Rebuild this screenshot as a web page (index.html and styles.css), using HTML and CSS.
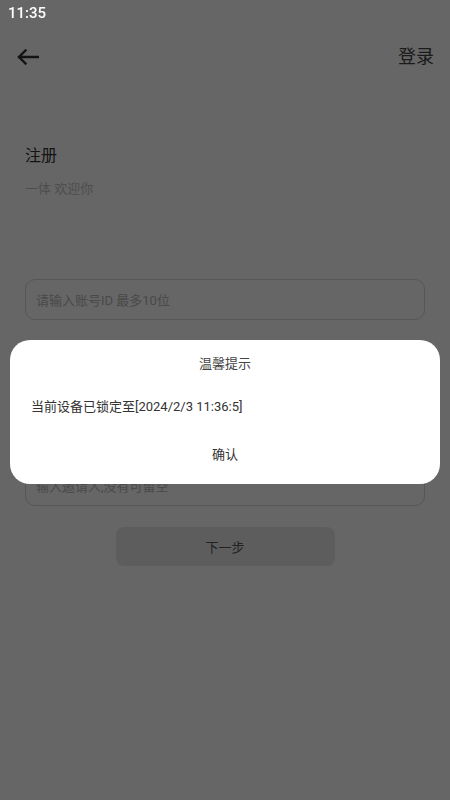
FILE: index.html
```html
<!DOCTYPE html>
<html lang="zh">
<head>
<meta charset="utf-8">
<title>注册</title>
<link rel="stylesheet" href="styles.css">
</head>
<body>
<div class="status">11:35</div>
<div class="page">
  <div class="header">
    <svg class="back" width="22" height="16" viewBox="0 0 22 16">
      <path d="M21 8H2 M8.5 1.5L2 8l6.5 6.5" fill="none" stroke="#333" stroke-width="2.4" stroke-linecap="square" stroke-linejoin="miter"/>
    </svg>
    <span class="login">登录</span>
  </div>
  <div class="title">注册</div>
  <div class="subtitle">一体 欢迎你</div>
  <div class="form">
    <div class="input">请输入账号ID 最多10位</div>
    <div class="input"></div>
    <div class="input">输入邀请人,没有可留空</div>
  </div>
  <div class="btn">下一步</div>
</div>
<div class="mask">
  <div class="dialog">
    <div class="d-title">温馨提示</div>
    <div class="d-msg">当前设备已锁定至[2024/2/3 11:36:5]</div>
    <div class="d-ok">确认</div>
  </div>
</div>
</body>
</html>
```
FILE: styles.css
```css
html, body {
  margin: 0;
  padding: 0;
  background: #fff;
  font-family: Roboto, "Noto Sans CJK SC", sans-serif;
  width: 450px;
  height: 800px;
  overflow: hidden;
}
.status {
  position: relative;
  z-index: 3;
  height: 26px;
  line-height: 26px;
  padding-left: 8px;
  font-size: 15px;
  font-weight: 500;
  color: #fff;
}
.page {
  display: flex;
  flex-direction: column;
}
.header {
  height: 62px;
  display: flex;
  align-items: center;
  justify-content: space-between;
  padding: 0 16px 0 17px;
}
.back {
  display: block;
  margin-top: -1px;
}
.login {
  font-size: 18px;
  color: #444;
  line-height: 24px;
}
.title {
  margin-top: 56px;
  padding-left: 25px;
  font-size: 16px;
  line-height: 24px;
  color: #333;
}
.subtitle {
  margin-top: 11px;
  padding-left: 25px;
  font-size: 13px;
  line-height: 20px;
  color: #c4c4c4;
}
.form {
  margin: 80px 25px 0;
  display: flex;
  flex-direction: column;
  gap: 52px;
}
.input {
  box-sizing: border-box;
  height: 41px;
  border: 1px solid #d6d6d6;
  border-radius: 10px;
  padding-left: 10px;
  display: flex;
  align-items: center;
  font-size: 13px;
  color: #b8b8b8;
}
.btn {
  align-self: center;
  margin-top: 21px;
  width: 219px;
  height: 39px;
  border-radius: 8px;
  background: #e9e9e9;
  display: flex;
  align-items: center;
  justify-content: center;
  font-size: 13px;
  color: #555;
}
.mask {
  position: fixed;
  inset: 0;
  z-index: 2;
  background: rgba(0, 0, 0, 0.6);
  display: flex;
  flex-direction: column;
  padding: 340px 10px 0;
}
.dialog {
  background: #fff;
  border-radius: 20px;
  padding: 14px 21px 19px;
  display: flex;
  flex-direction: column;
  font-size: 13px;
  line-height: 20px;
  color: #333;
}
.d-title {
  text-align: center;
  color: #444;
}
.d-msg {
  margin-top: 23px;
}
.d-ok {
  margin-top: 28px;
  text-align: center;
}
```
